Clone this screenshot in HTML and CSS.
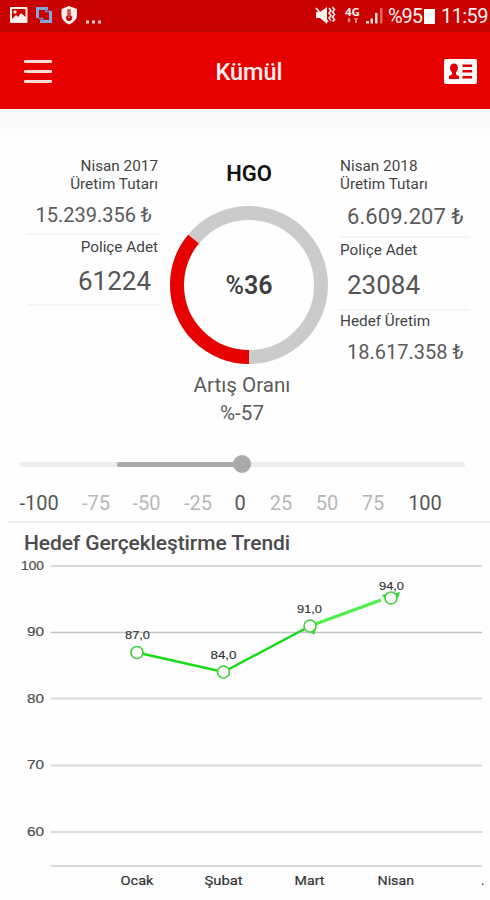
FILE: index.html
```html
<!DOCTYPE html>
<html lang="tr">
<head>
<meta charset="utf-8">
<title>Kümül</title>
<link rel="stylesheet" href="styles.css">
</head>
<body>
<div class="status">
  <div class="status-left">
    <svg width="92" height="20" viewBox="0 0 92 20">
      <path fill="#fff0ee" fill-rule="evenodd" d="M2 1H17Q18.500 1 18.500 2V16Q18.500 17 17 17H2Q1 17 1 16V2Q1 1 2 1ZM3 3V13L7 9L9 11L12 7L16.500 11V3Z"/>
      <circle cx="6" cy="6" r="1.700" fill="#fff0ee"/>
      <path fill="none" stroke="#80a8dc" stroke-width="3" d="M28.500 12V2.500H39M41.500 5V15.500H31"/>
      <path fill="none" stroke="#6d9ad6" stroke-width="1.500" d="M30 12.500H33.500V16M37 2V5.500H42"/>
      <path fill="#fff0ee" d="M60 0L68 3V9Q68 15 60 18.500Q52.500 15 52.500 9V3Z"/>
      <path fill="#c80000" d="M58.500 3H61.500V10H58.500Z"/>
      <circle cx="60" cy="12" r="3" fill="#c80000"/>
      <path stroke="#fff0ee" stroke-width="1" d="M60 3V12" stroke-dasharray="1.500 1"/>
      <path fill="#f6cdc9" d="M77 14.500h3v3h-3zM83 14.500h3v3h-3zM89 14.500h3v3h-3z"/>
    </svg>
  </div>
  <div class="status-right">
    <svg class="signals" width="70" height="20" viewBox="0 0 70 20">
      <path fill="#fff0ee" d="M1 6H5L12 1V18L5 12H1Z"/>
      <path stroke="#fff0ee" stroke-width="1.800" d="M1 2L13 16"/>
      <path fill="none" stroke="#fff0ee" stroke-width="1.600" d="M14 2l2 2.500l-2 2.500l2 2.500l-2 2.500l2 2.500M17.500 1l2 2.500l-2 2.500l2 2.500l-2 2.500l2 2.500l-2 2"/>
      <text class="network" x="30" y="9.500" textLength="15" lengthAdjust="spacingAndGlyphs">4G</text>
      <path fill="#e78582" d="M33 12h2v2h1l-2 3l-2-3h1zM39 12h4l-1 2v3h-2v-3z"/>
      <path fill="#fbdad6" d="M51 15h3v2.500h-3zM55.500 12.500h2.500v5h-2.500zM60 7h2.500v10.500h-2.500z"/>
      <path fill="#df6661" d="M65 2h2.500v15.500h-2.500z"/>
    </svg>
    <span class="percent">%95</span>
    <span class="battery"></span>
    <span class="clock">11:59</span>
  </div>
</div>
<header class="bar">
  <div class="menu"><i></i><i></i><i></i></div>
  <h1>Kümül</h1>
  <svg class="card" width="33" height="25" viewBox="0 0 33 25">
    <rect width="33" height="25" rx="2" fill="#fffafa"/>
    <g fill="#dc0000">
      <ellipse cx="10" cy="9" rx="4" ry="4.500"/>
      <path d="M8 11h4v4.500l3 1.500v3H5v-3l3-1.500z"/>
      <path d="M18.500 5.500H28v2.500h-9.500zM18.500 11H28v2.500h-9.500zM18.500 17H28v2.500h-9.500z"/>
    </g>
  </svg>
</header>
<main>
  <section class="stats">
    <div class="col left">
      <p class="label first">Nisan 2017<br><span class="sub">Üretim Tutarı</span></p>
      <p class="amount">15.239.356 ₺</p>
      <p class="label policy">Poliçe Adet</p>
      <p class="count">61224</p>
    </div>
    <div class="middle">
      <h2>HGO</h2>
      <div class="gauge">
        <svg width="158" height="158" viewBox="0 0 158 158">
          <circle cx="79" cy="79" r="72" fill="none" stroke="#cbcbcb" stroke-width="14"/>
          <circle cx="79" cy="79" r="72" fill="none" stroke="#e60000" stroke-width="14" pathLength="100" stroke-dasharray="36 64" transform="rotate(90 79 79)"/>
          <text class="rate" x="79" y="88" text-anchor="middle"><tspan class="sign">%</tspan>36</text>
        </svg>
      </div>
      <p class="growth">Artış Oranı<br>%-57</p>
    </div>
    <div class="col right">
      <p class="label first">Nisan 2018<br><span class="sub">Üretim Tutarı</span></p>
      <p class="amount current">6.609.207 ₺</p>
      <p class="label policy">Poliçe Adet</p>
      <p class="count">23084</p>
      <p class="label target">Hedef Üretim</p>
      <p class="amount goal">18.617.358 ₺</p>
    </div>
  </section>
  <section class="slider">
    <div class="track"><div class="fill"><span class="knob"></span></div></div>
    <div class="ticks">
      <b>-100</b><span>-75</span><span>-50</span><span>-25</span><b>0</b><span>25</span><span>50</span><span>75</span><b>100</b>
    </div>
  </section>
  <section class="trend">
    <h3>Hedef Gerçekleştirme Trendi</h3>
    <svg class="chart" width="490" height="343" viewBox="0 557 490 343">
      <g stroke="#dadada" stroke-width="2">
        <path d="M51 566H482"/>
        <path d="M51 632.500H482" stroke="#c4c4c4" stroke-width="1.400"/>
        <path d="M51 698.500H482"/>
        <path d="M51 765.500H482"/>
        <path d="M51 832H482"/>
        <path d="M51 866H482"/>
      </g>
      <g class="axis">
        <text x="21" y="569.500" textLength="23" lengthAdjust="spacingAndGlyphs">100</text>
        <text x="27" y="636" textLength="17" lengthAdjust="spacingAndGlyphs">90</text>
        <text x="27" y="702.500" textLength="17" lengthAdjust="spacingAndGlyphs">80</text>
        <text x="27" y="769" textLength="17" lengthAdjust="spacingAndGlyphs">70</text>
        <text x="27" y="836" textLength="17" lengthAdjust="spacingAndGlyphs">60</text>
      </g>
      <g class="months">
        <text x="120.500" y="884.500" textLength="33" lengthAdjust="spacingAndGlyphs">Ocak</text>
        <text x="204.500" y="884.500" textLength="38" lengthAdjust="spacingAndGlyphs">Şubat</text>
        <text x="294.500" y="884.500" textLength="30" lengthAdjust="spacingAndGlyphs">Mart</text>
        <text x="377.500" y="884.500" textLength="36.500" lengthAdjust="spacingAndGlyphs">Nisan</text>
        <text x="481" y="884.500">.</text>
      </g>
      <g fill="none" stroke-width="2.400">
        <path stroke="#16dc16" d="M137 652.500L223.500 672L310 626"/>
        <path stroke="#4df04d" stroke-width="3" d="M310 626L381 600"/>
      </g>
      <path fill="#22d822" d="M310 631l6-2l-2 6zM393 594l7-2l-2 6zM382 595l4-1l-1 5z"/>
      <g fill="#fff" stroke="#3fcf3f" stroke-width="1.600">
        <circle cx="137" cy="652.500" r="6"/>
        <circle cx="223.500" cy="672" r="6"/>
        <circle cx="310" cy="626" r="6"/>
        <circle cx="391" cy="598" r="6"/>
      </g>
      <g class="values">
        <text x="125" y="639" textLength="25" lengthAdjust="spacingAndGlyphs">87,0</text>
        <text x="210.500" y="659" textLength="26" lengthAdjust="spacingAndGlyphs">84,0</text>
        <text x="297" y="612.500" textLength="25" lengthAdjust="spacingAndGlyphs">91,0</text>
        <text x="379" y="589.500" textLength="25" lengthAdjust="spacingAndGlyphs">94,0</text>
      </g>
    </svg>
  </section>
</main>
</body>
</html>
```
FILE: styles.css
```css
* { box-sizing: border-box; }
body {
  margin: 0;
  width: 490px;
  height: 900px;
  overflow: hidden;
  background: #fefefe;
  color: #555;
  font-family: Roboto, "Liberation Sans", sans-serif;
}
p, h1, h2, h3 { margin: 0; }
svg { display: block; }

.status {
  display: flex;
  justify-content: space-between;
  height: 32px;
  padding: 6px 3px 0 9px;
  background: #c80000;
  color: #fff0ee;
}
.status-right { display: flex; font-size: 20px; line-height: 21px; }
.signals { margin-right: 3px; }
.network { font: 700 10px "Open Sans", sans-serif; fill: #fff0ee; }
.percent { width: 35px; letter-spacing: -1.1px; }
.battery { width: 11px; height: 15px; margin: 3px 6px 0 1px; background: #fff; }
.clock { width: 46px; letter-spacing: -0.6px; }

.bar {
  display: flex;
  justify-content: space-between;
  align-items: center;
  height: 77px;
  padding: 2px 13px 0 24px;
  background: #e60000;
  box-shadow: 0 1px 3px rgba(90, 50, 50, .6);
}
.menu { display: grid; gap: 7px; width: 28px; }
.menu i { height: 3px; border-radius: 1px; background: #ffdcd8; }
.bar h1 {
  margin-left: 2px;
  font-size: 23.5px;
  font-weight: 500;
  line-height: 30px;
  color: #fff0ee;
}

main { background: linear-gradient(#f8f8f7, #fefefe 36px); }
.stats {
  display: grid;
  grid-template-columns: 132px 158px 132px;
  column-gap: 10px;
  height: 347px;
  padding: 48px 18px 0 28px;
}
.left { text-align: right; }
.label { font-size: 15.3px; line-height: 18px; color: #444; padding-right: 2px; }
.amount { font-size: 20px; line-height: 24px; color: #5b5b5b; border-bottom: 2px solid #f5f5f5; }
.count { font-size: 26px; line-height: 32px; color: #555; border-bottom: 2px solid #f5f5f5; }
.left .amount { height: 32px; margin-top: 10px; padding-right: 8px; }
.left .policy { margin-top: 3px; }
.left .count { height: 41px; margin-top: 9px; padding-right: 9px; }
.right { margin-left: 2px; }
.right .amount { height: 33px; margin-top: 12px; padding-left: 7px; }
.right .current { font-size: 22px; letter-spacing: 0.1px; white-space: nowrap; }
.right .policy { margin-top: 3px; }
.right .count { height: 42px; margin-top: 10px; padding-left: 7px; }
.right .target { margin-top: 1px; }
.right .goal { margin-top: 10px; border: 0; }

.middle { text-align: center; }
.middle h2 {
  height: 49px;
  padding-top: 3px;
  font-size: 22px;
  font-weight: 600;
  line-height: 28px;
  color: #111;
}
.rate { font-size: 25px; font-weight: 600; fill: #3e3e3e; }
.sign { font-weight: 500; }
.growth { margin: 7px 0 0 -14px; font-size: 20.6px; line-height: 28px; color: #5b5b5b; }

.slider { height: 65px; padding: 6px 0 0 20px; }
.track { width: 445px; height: 5px; padding-left: 97px; border-radius: 2px; background: #ededeb; }
.fill { position: relative; width: 125px; height: 5px; border-radius: 2px; background: #aaa; }
.knob {
  position: absolute;
  top: -7px;
  right: -9px;
  width: 18px;
  height: 18px;
  border-radius: 50%;
  background: #aaa;
}
.ticks {
  display: grid;
  grid-template-columns: 58px 56px 45px 58px 26px 56px 36px 56px 48px;
  margin: 24px 0 0 -10px;
  font-size: 20px;
  line-height: 24px;
  text-align: center;
  color: #b8b8b8;
}
.ticks b { font-weight: 400; color: #555; }

.trend h3 {
  height: 36px;
  margin-left: 8px;
  padding: 7px 0 0 16px;
  border-top: 2px solid #f1f1f1;
  font-size: 21px;
  font-weight: 500;
  line-height: 26px;
  letter-spacing: -0.1px;
  color: #4c4c4c;
}
.axis { font: 12.5px "Liberation Sans", sans-serif; fill: #505050; stroke: #505050; stroke-width: .2px; }
.months { font: 13px Roboto, sans-serif; fill: #333; stroke: #333; stroke-width: .2px; }
.values { font: 11.5px "Liberation Sans", sans-serif; fill: #333; stroke: #333; stroke-width: .15px; }
```
